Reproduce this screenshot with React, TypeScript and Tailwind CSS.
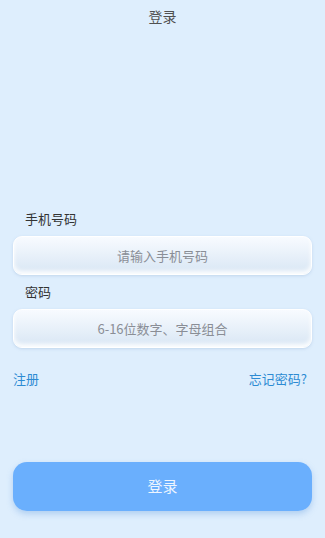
import React from "react";

const font = { fontFamily: '"Noto Sans CJK SC", "Noto Sans", sans-serif' };

export default function App() {
  return (
    <div
      className="w-[325px] h-[538px] bg-[#deeefd] flex flex-col px-[13px] font-['Noto_Sans_CJK_SC',_'Noto_Sans',_sans-serif]"
      style={font}
    >
      <div className="h-[32px] flex items-center justify-center text-[14px] text-[#505050]">登录</div>

      <div className="mt-[178px] pl-[12px] h-[18px] leading-[18px] text-[13px] text-[#333]">手机号码</div>
      <input
        className="mt-[8px] h-[39px] w-full rounded-[9px] border border-white bg-gradient-to-b from-[#f8fbff] to-[#d8e6f4] text-center text-[13px] text-[#333] placeholder:text-[#8a8e96] outline-none shadow-[inset_0_-3px_4px_rgba(255,255,255,0.95),0_1px_3px_rgba(140,170,205,0.35)]"
        placeholder="请输入手机号码"
      />

      <div className="mt-[8px] pl-[12px] h-[18px] leading-[18px] text-[13px] text-[#333]">密码</div>
      <input
        type="text"
        className="mt-[8px] h-[39px] w-full rounded-[9px] border border-white bg-gradient-to-b from-[#f8fbff] to-[#d8e6f4] text-center text-[13px] text-[#333] placeholder:text-[#8a8e96] outline-none shadow-[inset_0_-3px_4px_rgba(255,255,255,0.95),0_1px_3px_rgba(140,170,205,0.35)]"
        placeholder="6-16位数字、字母组合"
      />

      <div className="mt-[22px] flex justify-between h-[18px] leading-[18px] text-[13px] text-[#2d8bd3]">
        <span>注册</span>
        <span className="pr-[5px]">忘记密码?</span>
      </div>

      <button className="mt-[74px] h-[49px] w-full rounded-[14px] bg-[#6aaffd] text-[15px] text-[#eef5ff] shadow-[0_3px_6px_rgba(90,150,220,0.35)]">
        登录
      </button>
    </div>
  );
}
